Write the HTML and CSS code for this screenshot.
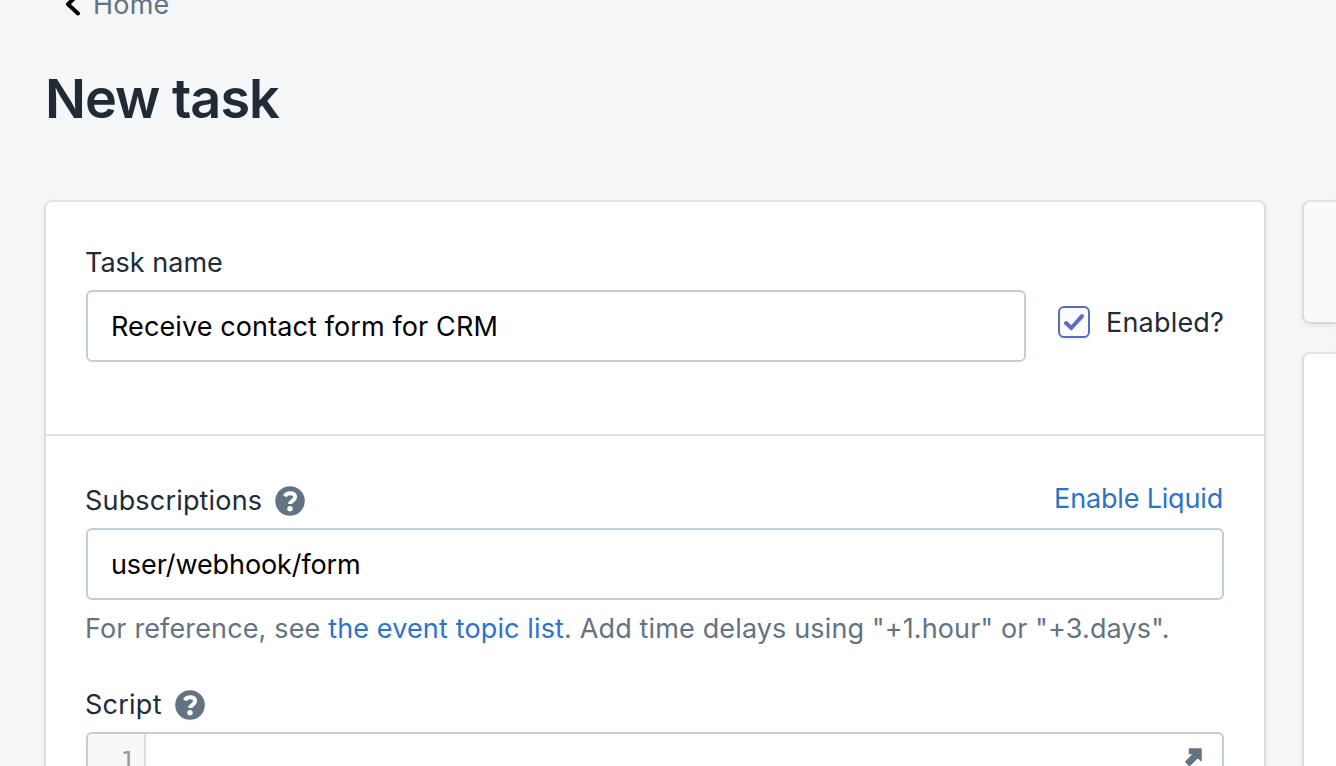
FILE: index.html
```html
<!DOCTYPE html>
<html lang="en"><head><meta charset="utf-8"><title>New task</title><link rel="stylesheet" href="styles.css"></head>
<body>
<nav class="breadcrumb"><svg class="chevron" viewBox="0 0 18 28"><path d="M15.500 4 6 13.300 16 22.500" fill="none" stroke="#000" stroke-width="4" stroke-linecap="round" stroke-linejoin="round"/></svg><a class="home">Home</a></nav>
<h1 class="title">New task</h1>
<div class="layout">
<main class="card">
<section class="name-section">
<label class="label task-label"><span class="task">Task name</span></label>
<div class="name-row"><div class="input name-input"><span class="name-value">Receive contact form for CRM</span></div>
<div class="enabled"><div class="checkbox"><svg viewBox="0 0 28 28"><path d="m6 15 5.300 5L22 8.200" fill="none" stroke="#5c6ac4" stroke-width="4" stroke-linecap="round"/></svg></div><span class="enabled-text">Enabled?</span></div></div>
</section>
<section class="script-section">
<div class="label-row"><div class="label"><span class="subs">Subscriptions</span><svg class="help" viewBox="0 0 30 30"><circle cx="15" cy="15" r="14.8" fill="#637381"/><path d="M9.800 10.300c2.500-4.500 10.300-3.800 10.300.8 0 3.600-5 3.700-5 6.900" fill="none" stroke="#fff" stroke-width="4"/><circle cx="15" cy="22.800" r="2.700" fill="#fff"/></svg></div><a class="liquid">Enable Liquid</a></div>
<div class="input"><span class="subs-value">user/webhook/form</span></div>
<p class="hint">For reference, see <a>the event topic list</a>. Add time delays using "+1.hour" or "+3.days".</p>
<div class="label script-label"><span class="script">Script</span><svg class="help" viewBox="0 0 30 30"><circle cx="15" cy="15" r="14.8" fill="#637381"/><path d="M9.800 10.300c2.500-4.500 10.300-3.800 10.300.8 0 3.600-5 3.700-5 6.900" fill="none" stroke="#fff" stroke-width="4"/><circle cx="15" cy="22.800" r="2.700" fill="#fff"/></svg></div>
<div class="editor"><div class="gutter">1</div><svg class="expand" viewBox="0 0 20 20"><path d="M6.500 2H18v11.500l-3.200-3.200-8.300 8.200-3.700-3.700 8.200-8.200H6.500z" fill="#637381" stroke="#637381" stroke-width="1.500" stroke-linejoin="round"/></svg></div>
</section>
</main>
<aside class="side"><div class="side-card small"></div><div class="side-card large"></div></aside>
</div>
</body></html>
```
FILE: styles.css
```css
*{box-sizing:border-box}
body{margin:0;width:1336px;height:766px;overflow:hidden;background:#f4f6f8;color:#212b36;font:27px/40px Inter,sans-serif}
.breadcrumb{height:24px;display:flex;padding-left:62px;color:#637381}
.chevron{width:18px;height:28px;margin-top:-9px;flex:none}
.home{margin:-15px 0 0 13px;letter-spacing:.2px}
.title{margin:43px 0 0 45px;font-size:54px;line-height:64px;font-weight:600;letter-spacing:-1px}
.layout{display:flex;gap:40px;margin-top:71px;padding-left:46px}
.card{width:1218px;height:564px;background:#fff;border-radius:6px 6px 0 0;box-shadow:0 0 0 2px #3f3f4414,0 2px 6px #3f3f4426;flex:none}
.name-section{height:234px;padding:40px 40px 0;border-bottom:2px solid #dfe3e8}
.label{display:flex;align-items:center}
.task-label{padding-top:1px}
.name-row{display:flex;gap:32px;margin-top:7px}
.input{width:1138px;height:72px;border:2px solid #c4cdd5;border-radius:6px;background:#fff;color:#000;padding:15px 23px 13px;box-shadow:inset 0 2px 0 #f9fafb}
.name-input{width:940px;flex:none}
.enabled{display:flex;align-items:center;height:64px;gap:16px}
.checkbox{width:32px;height:32px;border:2px solid #5c6ac4;border-radius:6px;flex:none;background:#fafbfb;box-shadow:0 2px 1px #0000000c}
.checkbox svg{display:block;width:28px;height:28px}
.script-section{padding:44px 40px 0}
.label-row{display:flex;justify-content:space-between;margin-bottom:8px}
.task{margin-left:-1px}
.name-value{letter-spacing:.11px}
.enabled-text{letter-spacing:.2px;padding-top:1px}
.subs{width:176px;margin-left:-1px;padding-top:1px;margin-bottom:-1px;letter-spacing:.18px}
.subs-value{letter-spacing:-.1px}
.script{width:76px;margin-left:-1px;padding-top:1px;margin-bottom:-1px;letter-spacing:.25px}
.help{width:30px;height:30px;margin-left:14px;margin-top:2px}
.liquid,.hint a{color:#2c73c9}
.liquid{margin:-1px 1px 0 0;height:40px;letter-spacing:-.17px}
.hint{margin:9px 0 0 -1px;color:#637381;white-space:nowrap;letter-spacing:.14px}
.script-label{margin-top:35px}
.editor{height:34px;margin-top:8px;border:2px solid #c4cdd5;border-bottom:0;border-radius:6px 6px 0 0;display:flex;justify-content:space-between;overflow:hidden}
.gutter{width:58px;background:#f7f7f7;border-right:2px solid #ddd;color:#999;font:24px/54px "DejaVu Sans Mono",monospace;text-align:right;padding-right:9px}
.expand{width:20px;height:20px;margin:13px 19px 0}
.side{width:32px;height:564px;flex:none}
.side-card{background:#fff;border-radius:6px 0 0 6px;box-shadow:0 0 0 2px #3f3f4414,0 2px 6px #3f3f4426}
.small{height:120px;background:#f9fafb;margin-bottom:32px}
.large{height:412px;border-radius:6px 0 0 0}
```
